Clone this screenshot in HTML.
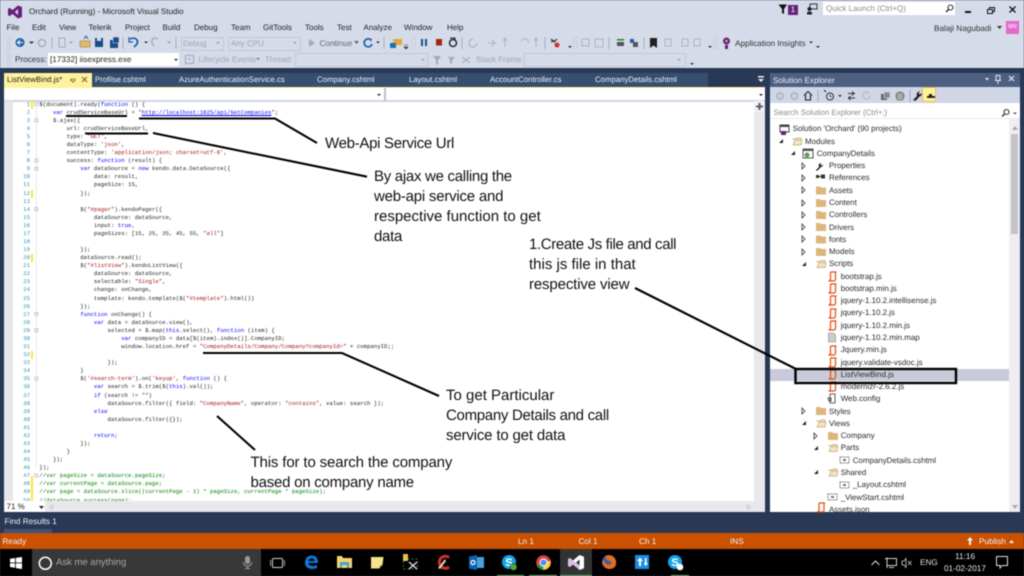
<!DOCTYPE html>
<html><head><meta charset="utf-8"><title>Orchard</title>
<style>
html,body{margin:0;padding:0;background:#293955;}
#r{position:relative;width:1024px;height:576px;overflow:hidden;background:#293955;font-family:"Liberation Sans",sans-serif;font-size:8px;color:#222;text-rendering:geometricPrecision;filter:blur(.42px);}
.a{position:absolute;}
.t{position:absolute;white-space:nowrap;line-height:12px;height:12px;}
.g{color:#a2a4a5;}
.w{color:#f0f2f6;}
pre{position:absolute;margin:0;font-family:"Liberation Mono",monospace;font-size:5.7px;line-height:8.08px;white-space:pre;}
.k{color:#0000ff}.s{color:#a31515}.c{color:#008000}.u{color:#0000ff;text-decoration:underline}
.tree .t{color:#2a2a2a;font-size:7.95px}
.n{position:absolute;font-size:15px;line-height:20px;color:#111;white-space:nowrap}
.y{position:absolute;left:31px;width:2px;background:#fee62e}
svg{position:absolute;overflow:visible}
</style></head><body><div id="r">

<!-- chrome background -->
<div class="a" style="left:0;top:0;width:1024px;height:68px;background:#d6dbe9"></div>

<!-- title -->
<svg style="left:7px;top:5px" width="16" height="14" viewBox="0 0 16 14"><path d="M11 0.5 15 2v10l-4 1.5L5.5 9 2.6 11 1 10.2V3.8L2.6 3l2.9 2zM11 4 7.8 7 11 10z" fill="#68217a" fill-rule="evenodd"/></svg>
<div class="t" style="left:29px;top:5.5px;font-size:8px">Orchard (Running) - Microsoft Visual Studio</div>

<!-- right caption -->
<svg style="left:778px;top:3px" width="20" height="12"><path d="M0.5 1.5H9L6 6v5L4 10V6z" fill="#111"/></svg>
<div class="a" style="left:788px;top:5px;width:10px;height:10px;background:#68217a;color:#fff;font-size:8px;line-height:10px;text-align:center">1</div>
<svg style="left:806px;top:3px" width="12" height="12"><rect x="4" y="1" width="7" height="5" fill="none" stroke="#333"/><circle cx="3.5" cy="6" r="2" fill="#222"/><path d="M1 11.5V10q0-1.500 2.500-1.500T6 10v1.500z" fill="#222"/></svg>
<div class="a" style="left:823px;top:2px;width:132px;height:13px;background:#fff"></div>
<div class="t g" style="left:826px;top:3px;color:#8a8a8a">Quick Launch (Ctrl+Q)</div>
<svg style="left:945px;top:4px" width="9" height="9"><circle cx="5.500" cy="3.500" r="2.500" fill="none" stroke="#333" stroke-width="1.100"/><path d="M3.800 5.200 1 8" stroke="#333" stroke-width="1.500"/></svg>
<div class="a" style="left:965px;top:11px;width:6px;height:2px;background:#111"></div>
<svg style="left:987px;top:7px" width="8" height="7"><rect x="2.500" y=".5" width="5" height="4" fill="none" stroke="#111"/><rect x=".5" y="2.500" width="5" height="4" fill="#d6dbe9" stroke="#111"/></svg>
<svg style="left:1009px;top:6px" width="7" height="7"><path d="M.5.500l6 6M6.500.500l-6 6" stroke="#111" stroke-width="1.300"/></svg>
<div class="t" style="left:934px;top:22.500px;font-size:8.200px;color:#333">Balaji Nagubadi</div>
<svg style="left:997px;top:26px" width="5" height="3"><path d="M0 0h5L2.500 3z" fill="#333"/></svg>
<div class="a" style="left:1006px;top:21px;width:13px;height:13px;background:#e369cb;color:#fff;font-size:6px;line-height:13px;text-align:center">BN</div>

<!-- menu -->
<div class="t" style="left:6.500px;top:21.500px">File</div>
<div class="t" style="left:32px;top:21.500px">Edit</div>
<div class="t" style="left:59px;top:21.500px">View</div>
<div class="t" style="left:88.500px;top:21.500px">Telerik</div>
<div class="t" style="left:125px;top:21.500px">Project</div>
<div class="t" style="left:162.500px;top:21.500px">Build</div>
<div class="t" style="left:194px;top:21.500px">Debug</div>
<div class="t" style="left:231px;top:21.500px">Team</div>
<div class="t" style="left:263px;top:21.500px">GitTools</div>
<div class="t" style="left:305px;top:21.500px">Tools</div>
<div class="t" style="left:337px;top:21.500px">Test</div>
<div class="t" style="left:363.500px;top:21.500px">Analyze</div>
<div class="t" style="left:404px;top:21.500px">Window</div>
<div class="t" style="left:447px;top:21.500px">Help</div>

<!-- toolbar row 1 -->
<svg style="left:0;top:34px" width="1024" height="18">
<path d="M8 3v13M10 3v13" stroke="#bcc3d3" stroke-dasharray="1 1"/>
<circle cx="20" cy="8.500" r="4.500" fill="#1c5fa8"/><path d="M23 8.500h-5M20 6l-2.500 2.500L20 11" stroke="#fff" fill="none"/>
<path d="M29 7.500h5l-2.500 2.500z" fill="#333"/>
<circle cx="42" cy="9" r="3.500" fill="none" stroke="#a8adb8" stroke-width="1.500"/>
<path d="M52 3v12" stroke="#a5adbf"/>
<rect x="59" y="4" width="6" height="9" fill="none" stroke="#aab"/>
<path d="M69 7.500h4l-2 2z" fill="#999"/>
<path d="M80 7h10v6H80z" fill="#e5b96c" stroke="#8a6c30" stroke-width=".5"/><path d="M84 5l2-3 2 3" stroke="#1c5fa8" fill="none"/>
<rect x="95" y="4" width="8" height="9" fill="#1a4d86"/><rect x="97" y="4" width="4" height="3" fill="#d6dbe9"/>
<rect x="110" y="6" width="8" height="8" fill="#1a4d86"/><rect x="113" y="3" width="6" height="6" fill="#1a4d86" stroke="#d6dbe9" stroke-width=".5"/>
<path d="M123 3v12" stroke="#a5adbf"/>
<path d="M130 5q5-2 7 1t-3 7" fill="none" stroke="#1c5fa8" stroke-width="1.700"/><path d="M129 3v5h4" fill="none" stroke="#1c5fa8" stroke-width="1.300"/>
<path d="M144 7.500h4l-2 2z" fill="#333"/>
<path d="M158 5q-5-2-6 1t2 6" fill="none" stroke="#a9aeb9" stroke-width="1.500"/>
<path d="M167 7.500h4l-2 2z" fill="#999"/>
<path d="M176 3v12" stroke="#a5adbf"/>
<rect x="181.500" y="3.500" width="42" height="13" fill="none" stroke="#c2c8d8"/><path d="M216 8h4l-2 2z" fill="#a0a0a8"/>
<rect x="228.500" y="3.500" width="72" height="13" fill="none" stroke="#c2c8d8"/><path d="M293 8h4l-2 2z" fill="#a0a0a8"/>
<path d="M309 5v8l6-4z" fill="#a4a9b5"/>
<path d="M371 6a4 4 0 1 0 1 4" fill="none" stroke="#1c5fa8" stroke-width="1.700"/><path d="M369 4l3 1-1 3z" fill="#1c5fa8"/>
<path d="M376 7.500h4l-2 2z" fill="#333"/>
<path d="M384 3v12" stroke="#a5adbf"/>
<rect x="393" y="5" width="9" height="6" fill="#e0a93b"/><rect x="390" y="9" width="6" height="5" fill="#1c6fb8"/>
<path d="M404 11h4M404 13l2 2 2-2z" fill="#333" stroke="#333" stroke-width=".6"/>
<path d="M412 2v14M415 2v14" stroke="#b9c0d0" stroke-dasharray="1 1"/>
<rect x="421" y="5" width="2" height="7" fill="#1a4d86"/><rect x="425" y="5" width="2" height="7" fill="#1a4d86"/>
<rect x="436" y="5" width="6" height="6.500" fill="#a1260d"/>
<circle cx="453" cy="9" r="3.500" fill="none" stroke="#222" stroke-width="1.400"/><path d="M450 4h5v2" fill="none" stroke="#222"/>
<path d="M462 3v12" stroke="#a5adbf"/>
<path d="M473 5a4 4 0 1 0 4 4" fill="none" stroke="#aeb3be" stroke-width="1.200"/>
<path d="M488 9h7M492 6l3 3-3 3" fill="none" stroke="#aeb3be"/>
<path d="M505 4v9M503 7l2-3 2 3" fill="none" stroke="#aeb3be"/>
<path d="M521 7q3-4 7-1l1 3" fill="none" stroke="#aeb3be"/>
<path d="M536 4v9M534 7l2-3 2 3" fill="none" stroke="#aeb3be"/>
<path d="M545 3v12" stroke="#a5adbf"/>
<path d="M551 5l3 3 3-3M551 8l3-2" fill="none" stroke="#222"/><circle cx="557" cy="11" r="2.500" fill="#d0312d"/>
<path d="M567 10h4M568 12l2 2 2-2z" fill="#333"/>
<path d="M574 2v14M577 2v14" stroke="#b9c0d0" stroke-dasharray="1 1"/>
<rect x="582" y="5" width="7" height="7" fill="none" stroke="#aeb3be"/><rect x="595" y="5" width="8" height="8" fill="none" stroke="#aeb3be"/>
<path d="M609 3v12" stroke="#a5adbf"/>
<rect x="617" y="5" width="7" height="1.500" fill="#2e7d32"/><rect x="617" y="8" width="7" height="4" fill="#555"/>
<rect x="630" y="5" width="4" height="4" fill="#1c5fa8"/><rect x="633" y="8" width="5" height="5" fill="#555"/>
<path d="M644 3v12" stroke="#a5adbf"/>
<path d="M650 4h7v10l-3.500-2.500L650 14z" fill="#222"/>
<rect x="665" y="5" width="6" height="7" fill="none" stroke="#aeb3be"/><rect x="682" y="5" width="6" height="7" fill="none" stroke="#aeb3be"/><rect x="694" y="5" width="6" height="7" fill="none" stroke="#aeb3be"/>
<path d="M707 10h4M708 12l2 2 2-2z" fill="#333"/>
<path d="M714 2v14M717 2v14" stroke="#b9c0d0" stroke-dasharray="1 1"/>
<circle cx="726.500" cy="7" r="3.500" fill="#68217a"/><circle cx="726.500" cy="7" r="1.200" fill="#e5c36b"/><path d="M725 11h3v4h-3z" fill="#68217a"/>
<path d="M809 7.500h4l-2 2z" fill="#333"/>
<path d="M815 10h4M816 12l2 2 2-2z" fill="#333"/>
</svg>
<div class="t g" style="left:183px;top:37.500px">Debug</div>
<div class="t g" style="left:231px;top:37.500px">Any CPU</div>
<div class="t" style="left:319.500px;top:37.500px;color:#666;font-size:8.200px">Continue</div>
<svg style="left:354px;top:41px" width="5" height="3"><path d="M0 0h5L2.500 3z" fill="#666"/></svg>
<div class="t" style="left:735px;top:37.500px;color:#333;font-size:8.200px">Application Insights</div>

<!-- toolbar row 2 -->
<svg style="left:0;top:52px" width="1024" height="16">
<path d="M8 1v13M10 1v13" stroke="#bcc3d3" stroke-dasharray="1 1"/>
<rect x="185.500" y="3.500" width="8" height="8" fill="none" stroke="#a5a9b3"/><path d="M191 7h-3" stroke="#a5a9b3"/>
<path d="M256 6h4l-2 2z" fill="#777"/>
<rect x="295.500" y="1.500" width="132" height="13" fill="none" stroke="#c2c8d8"/><path d="M421 7h4l-2 2z" fill="#a0a0a8"/>
<path d="M433 4h8l-3 4v5l-2-1V8z" fill="#a5a9b3"/><path d="M448 5h7l-3 3v4l-2-1V8z" fill="#a5a9b3"/>
<path d="M462 5l8 6M470 5l-8 6" stroke="#a5a9b3"/>
<rect x="524.500" y="1.500" width="161" height="13" fill="none" stroke="#c2c8d8"/><path d="M677 7h4l-2 2z" fill="#a0a0a8"/>
<path d="M689 9h4M690 11l2 2 2-2z" fill="#333"/>
</svg>
<div class="t" style="left:15px;top:53.500px;color:#333;font-size:8.200px">Process:</div>
<div class="a" style="left:48px;top:53px;width:131px;height:13px;background:#fff"></div>
<div class="t" style="left:50px;top:53.500px;color:#222;font-size:8.200px">[17332] iisexpress.exe</div>
<svg style="left:174px;top:59px" width="4" height="2"><path d="M0 0h4L2 2z" fill="#222"/></svg>
<div class="t g" style="left:198.500px;top:53.500px">Lifecycle Events</div>
<div class="t g" style="left:265px;top:53.500px">Thread:</div>
<div class="t g" style="left:476px;top:53.500px">Stack Frame:</div>

<!-- tabs -->
<div class="a" style="left:92px;top:73px;width:616px;height:14px;background:#364e6f"></div>
<div class="a" style="left:4px;top:73px;width:88px;height:14px;background:#fff29d"></div>
<div class="a" style="left:4px;top:87px;width:761px;height:1px;background:#fff29d"></div>
<div class="t" style="left:7px;top:74px;color:#222;font-size:7.800px">ListViewBind.js*</div>
<svg style="left:70px;top:76px" width="20" height="8"><path d="M1 3h4v2H1zM0 4H1M3 5v2" fill="none" stroke="#75633d" stroke-width=".8"/><path d="M12 1l5 5M17 1l-5 5" stroke="#75633d" stroke-width="1"/></svg>
<div class="t w" style="left:95px;top:74px;font-size:7.800px">Profilse.cshtml</div>
<div class="t w" style="left:179px;top:74px;font-size:7.800px">AzureAuthenticationService.cs</div>
<div class="t w" style="left:317px;top:74px;font-size:7.800px">Company.cshtml</div>
<div class="t w" style="left:409px;top:74px;font-size:7.800px">Layout.cshtml</div>
<div class="t w" style="left:490px;top:74px;font-size:7.800px">AccountController.cs</div>
<div class="t w" style="left:595px;top:74px;font-size:7.800px">CompanyDetails.cshtml</div>
<svg style="left:758px;top:76px" width="7" height="6"><path d="M0 0h6v1.500H0zM0 3h6L3 6z" fill="#f0f2f6"/></svg>

<!-- editor -->
<div class="a" style="left:4px;top:88px;width:761px;height:424px;background:#fff"></div>
<div class="a" style="left:4px;top:100px;width:761px;height:1.500px;background:#cfd6e5"></div>
<div class="a" style="left:384px;top:88px;width:2px;height:13px;background:#b9c0d3"></div>
<svg style="left:377px;top:94px" width="4" height="2"><path d="M0 0h4L2 2z" fill="#222"/></svg>
<svg style="left:759px;top:94px" width="4" height="2"><path d="M0 0h4L2 2z" fill="#222"/></svg>
<div class="a" style="left:4px;top:101px;width:9px;height:400px;background:#e6e7e8"></div>
<div class="a" style="left:754px;top:101px;width:11px;height:400px;background:#e8e8ec"></div>
<div class="a" style="left:754px;top:101px;width:11px;height:11px;background:#eef0f5"></div>
<svg style="left:756px;top:103px" width="7" height="7"><path d="M3.500 0v7M0 3.500h7" stroke="#555" stroke-width="1.800"/></svg>
<div class="a" style="left:4px;top:501px;width:761px;height:11px;background:#e8e8ec"></div>
<div class="a" style="left:5px;top:501px;width:40px;height:11px;background:#fff;border:0"></div>
<div class="t" style="left:6.500px;top:500.500px;font-size:8px">71 %</div>
<svg style="left:39px;top:505.500px" width="5" height="3"><path d="M0 0h5L2.500 3z" fill="#222"/></svg>
<svg style="left:49px;top:504px" width="4" height="6"><path d="M4 0v6L0 3z" fill="#cfd0d4"/></svg>
<svg style="left:747px;top:504px" width="4" height="6"><path d="M0 0v6l4-3z" fill="#cfd0d4"/></svg>

<div class="y" style="top:101px;height:8px"></div>
<div class="y" style="top:189.500px;height:8px"></div>
<div class="y" style="top:254px;height:8px"></div>
<div class="y" style="top:351px;height:8px"></div>
<div class="y" style="top:476px;height:25px"></div>

<!-- line numbers -->
<pre style="left:10px;top:100.700px;width:20px;text-align:right;color:#2b91af;height:400px;overflow:hidden">1
2
3
4
5
6
7
8
9
10
11
12
13
14
15
16
17
18
19
20
21
22
23
24
25
26
27
28
29
30
31
32
33
34
35
36
37
38
39
40
41
42
43
44
45
46
47
48
49
50</pre>

<!-- outlining -->
<svg style="left:34px;top:100px" width="6" height="402">
<g fill="#fff" stroke="#a5a5a5" stroke-width=".6">
<rect x=".8" y="2.500" width="3" height="3"/><rect x=".8" y="18.700" width="3" height="3"/><rect x=".8" y="59" width="3" height="3"/><rect x=".8" y="67.200" width="3" height="3"/><rect x=".8" y="107.500" width="3" height="3"/><rect x=".8" y="212.500" width="3" height="3"/><rect x=".8" y="228.700" width="3" height="3"/><rect x=".8" y="277.200" width="3" height="3"/><rect x=".8" y="374" width="3" height="3"/>
</g>
<path d="M2.300 6V367" stroke="#d4d4d4" stroke-width=".5"/>
</svg>

<!-- code -->
<pre style="left:39.300px;top:100.700px;height:400px;overflow:hidden;color:#222">$(document).ready(<span class="k">function</span> () {
    <span class="k">var</span> crudServiceBaseUrl = <span class="s">"</span><span class="u">http://localhost:1025/api/GetCompanies</span><span class="s">"</span>;
    $.ajax({
        url: crudServiceBaseUrl,
        type: <span class="s">"GET"</span>,
        dataType: <span class="s">'json'</span>,
        contentType: <span class="s">'application/json; charset=utf-8'</span>,
        success: <span class="k">function</span> (result) {
            <span class="k">var</span> dataSource = <span class="k">new</span> kendo.data.DataSource({
                data: result,
                pageSize: 15,
            });

            $(<span class="s">"#pager"</span>).kendoPager({
                dataSource: dataSource,
                input: <span class="k">true</span>,
                pageSizes: [15, 25, 35, 45, 55, <span class="s">"all"</span>]

            });
            dataSource.read();
            $(<span class="s">"#listView"</span>).kendoListView({
                dataSource: dataSource,
                selectable: <span class="s">"Single"</span>,
                change: onChange,
                template: kendo.template($(<span class="s">"#template"</span>).html())
            });
            <span class="k">function</span> onChange() {
                <span class="k">var</span> data = dataSource.view(),
                    selected = $.map(<span class="k">this</span>.select(), <span class="k">function</span> (item) {
                        <span class="k">var</span> companyID = data[$(item).index()].CompanyID;
                        window.location.href = <span class="s">"CompanyDetails/Company/Company?companyId="</span> + companyID;;

                    });
            }
            $(<span class="s">'#search-term'</span>).on(<span class="s">'keyup'</span>, <span class="k">function</span> () {
                <span class="k">var</span> search = $.trim($(<span class="k">this</span>).val());
                <span class="k">if</span> (search != <span class="s">""</span>)
                    dataSource.filter({ field: <span class="s">"CompanyName"</span>, operator: <span class="s">"contains"</span>, value: search });
                <span class="k">else</span>
                    dataSource.filter({});

                <span class="k">return</span>;
            });
        }
    });
});
<span class="c">//var pageSize = dataSource.pageSize;</span>
<span class="c">//var currentPage = dataSource.page;</span>
<span class="c">//var page = dataSource.slice((currentPage - 1) * pageSize, currentPage * pageSize);</span>
<span class="c">//dataSource.success(page);</span></pre>

<!-- solution explorer -->
<div class="a" style="left:770px;top:73px;width:250px;height:14px;background:#4d6082"></div>
<div class="t w" style="left:773px;top:74.500px;font-size:8.100px">Solution Explorer</div>
<svg style="left:985px;top:75px" width="34" height="10"><path d="M0 3h4L2 5.500z" fill="#e8ebf2"/><path d="M11 .5h4v5h-4zM10 5.500h6M13 6v3" fill="none" stroke="#e8ebf2"/><path d="M24 1l5 5M29 1l-5 5" stroke="#e8ebf2" stroke-width="1.100"/></svg>
<div class="a" style="left:770px;top:87px;width:250px;height:16px;background:#cfd6e5"></div>
<div class="a" style="left:922px;top:87px;width:14px;height:15px;background:#fff29d;border:.5px solid #e5c365;box-sizing:border-box"></div>
<svg style="left:770px;top:87px" width="250" height="16">
<circle cx="10" cy="9" r="3.500" fill="#bfc3cc" stroke="#aeb2bc"/><path d="M12 9H8" stroke="#e8e8ee"/>
<circle cx="24.500" cy="9" r="3.500" fill="#bfc3cc" stroke="#aeb2bc"/><path d="M22.500 9h4" stroke="#e8e8ee"/>
<path d="M34 8.500l4-4 4 4M35.500 8v5h5V8" fill="none" stroke="#222" stroke-width="1.100"/>
<path d="M48 3v12" stroke="#a5adbf"/>
<path d="M54 3l2 2" stroke="#222"/><circle cx="60" cy="9.500" r="3.500" fill="none" stroke="#333"/><path d="M60 7.500v2h2" fill="none" stroke="#333" stroke-width=".7"/>
<path d="M68 8h4l-2 2z" fill="#333"/>
<path d="M78 6.500h7M82 4.500l2 2-2 2M85 11h-7M80.500 9l-2 2 2 2" fill="none" stroke="#333"/>
<path d="M99 6a3.500 3.500 0 1 0 1 3" fill="none" stroke="#aeb3be"/>
<rect x="111" y="7" width="6" height="6" fill="#666"/><rect x="114" y="5" width="6" height="6" fill="#888" stroke="#cfd6e5" stroke-width=".6"/>
<circle cx="130" cy="9" r="4" fill="none" stroke="#777"/><rect x="127" y="6" width="6" height="7" fill="#aaa" stroke="#666" stroke-width=".5"/>
<path d="M140 3v12" stroke="#a5adbf"/>
<path d="M143 13l4-4q-1-3 1.500-4.500L150 4l-1.500 2 1.500 1.500 2-1.500q0 3-2.500 3.500L145.500 14z" fill="#222"/>
<rect x="157" y="9" width="8" height="2" fill="#222"/><rect x="159" y="7" width="3" height="2" fill="#222"/>
</svg>
<div class="a" style="left:770px;top:103px;width:250px;height:409px;background:#fff"></div>
<div class="t" style="left:773.500px;top:107px;font-size:7.900px;color:#8a8a8a">Search Solution Explorer (Ctrl+;)</div>
<div class="a" style="left:770px;top:118px;width:250px;height:1px;background:#e8ecf3"></div>
<svg style="left:1001px;top:109px" width="18" height="8"><circle cx="5.500" cy="3" r="2.500" fill="none" stroke="#333" stroke-width="1.100"/><path d="M3.800 4.800 1 7.500" stroke="#333" stroke-width="1.400"/><path d="M12 3.500h4L14 5.500z" fill="#555"/></svg>
<!-- scrollbar -->
<div class="a" style="left:1009px;top:119px;width:11px;height:393px;background:#eeeef2"></div>
<div class="a" style="left:1011px;top:134px;width:7px;height:100px;background:#c2c3c9"></div>
<svg style="left:1012px;top:126px" width="6" height="4"><path d="M0 4h6L3 0z" fill="#a8a9ae"/></svg>
<svg style="left:1012px;top:505px" width="6" height="4"><path d="M0 0h6L3 4z" fill="#a8a9ae"/></svg>
<!-- selected row -->
<div class="a" style="left:770px;top:368.500px;width:239px;height:12.500px;background:#c9cbda"></div>

<div class="tree">
<div class="t" style="left:792.700px;top:123.300px">Solution 'Orchard' (90 projects)</div>
<div class="t" style="left:805px;top:135.600px">Modules</div>
<div class="t" style="left:816.700px;top:147.900px">CompanyDetails</div>
<div class="t" style="left:829px;top:160.100px">Properties</div>
<div class="t" style="left:829px;top:172.400px">References</div>
<div class="t" style="left:829px;top:184.700px">Assets</div>
<div class="t" style="left:829px;top:197px">Content</div>
<div class="t" style="left:829px;top:209.200px">Controllers</div>
<div class="t" style="left:829px;top:221.500px">Drivers</div>
<div class="t" style="left:829px;top:233.800px">fonts</div>
<div class="t" style="left:829px;top:246px">Models</div>
<div class="t" style="left:829px;top:258.300px">Scripts</div>
<div class="t" style="left:840.700px;top:270.600px">bootstrap.js</div>
<div class="t" style="left:840.700px;top:282.900px">bootstrap.min.js</div>
<div class="t" style="left:840.700px;top:295.100px">jquery-1.10.2.intellisense.js</div>
<div class="t" style="left:840.700px;top:307.400px">jquery-1.10.2.js</div>
<div class="t" style="left:840.700px;top:319.700px">jquery-1.10.2.min.js</div>
<div class="t" style="left:840.700px;top:332px">jquery-1.10.2.min.map</div>
<div class="t" style="left:840.700px;top:344.200px">Jquery.min.js</div>
<div class="t" style="left:840.700px;top:356.500px">jquery.validate-vsdoc.js</div>
<div class="t" style="left:840.700px;top:368.800px">ListViewBind.js</div>
<div class="t" style="left:840.700px;top:381px">modernizr-2.6.2.js</div>
<div class="t" style="left:840.700px;top:393.300px">Web.config</div>
<div class="t" style="left:829px;top:405.600px">Styles</div>
<div class="t" style="left:829px;top:417.900px">Views</div>
<div class="t" style="left:840.700px;top:430.100px">Company</div>
<div class="t" style="left:840.700px;top:442.400px">Parts</div>
<div class="t" style="left:852.700px;top:454.700px">CompanyDetails.cshtml</div>
<div class="t" style="left:840.700px;top:467px">Shared</div>
<div class="t" style="left:852.700px;top:479.200px">_Layout.cshtml</div>
<div class="t" style="left:840.700px;top:491.500px">_ViewStart.cshtml</div>
<div class="t" style="left:829px;top:503.800px;height:8px;overflow:hidden">Assets.json</div>
</div>

<svg style="left:770px;top:119px;width:250px;height:393px" width="250" height="393" viewBox="0 119 250 393">
<defs>
<path id="fo" d="M0 2h4l1 1h5v7H0z" fill="#dcb67a"/>
<path id="fp" d="M0 3h4l1-1h4v2H3L1 9h8l1-5H3" fill="#efe3cd" stroke="#c9a86a" stroke-width=".7"/>
<path id="tr" d="M0 0l3 3-3 3z" fill="#fff" stroke="#333" stroke-width=".8"/>
<path id="ex" d="M4 0v4H0z" fill="#222"/>
<g id="js"><path d="M3 1h6M3 1v7q0 2-2 2h5q2 0 2-2V1" fill="none" stroke="#e44d10" stroke-width="1.200"/></g>
<g id="cs"><rect x="0" y="2" width="9" height="6" fill="none" stroke="#777" stroke-dasharray="1.500 .7"/><path d="M3 4h3v2H3z" fill="#777"/></g>
</defs>
<g transform="translate(10 125)"><rect width="9" height="7" fill="none" stroke="#444"/><rect width="9" height="2" fill="#444"/><path d="M1 6h5v4H1z" fill="#68217a"/></g>
<use href="#ex" x="9" y="139"/><use href="#fp" x="22" y="136"/>
<use href="#ex" x="21" y="151"/><g transform="translate(33 149)"><rect width="10" height="9" fill="none" stroke="#555"/><rect width="10" height="2" fill="#555"/><circle cx="4" cy="6" r="2.500" fill="#5a9e5a"/></g>
<use href="#tr" x="32" y="163"/><path d="M46 170l3-3q-1-3 1-3.500l1.500-.500-1 1.500 1 1 1.500-1q0 2-2 2.500L47 171z" fill="#222"/>
<use href="#tr" x="32" y="175"/><rect x="46" y="175" width="3" height="3" fill="#333"/><rect x="51" y="174.500" width="4" height="4" fill="#333"/><path d="M49 176.500h2" stroke="#333"/>
<use href="#tr" x="32" y="187"/><use href="#fo" x="46" y="184.500"/>
<use href="#tr" x="32" y="200"/><use href="#fo" x="46" y="197"/>
<use href="#tr" x="32" y="212"/><use href="#fo" x="46" y="209"/>
<use href="#tr" x="32" y="224"/><use href="#fo" x="46" y="221"/>
<use href="#tr" x="32" y="236"/><use href="#fo" x="46" y="233.500"/>
<use href="#tr" x="32" y="249"/><use href="#fo" x="46" y="246"/>
<use href="#ex" x="32" y="262"/><use href="#fp" x="46" y="258.500"/>
<use href="#js" x="57.500" y="271"/><use href="#js" x="57.500" y="283"/><use href="#js" x="57.500" y="295"/>
<use href="#js" x="57.500" y="308"/><use href="#js" x="57.500" y="320"/>
<path d="M58.500 333h5l2 2v7h-7z" fill="#ccc" stroke="#888" stroke-width=".6"/>
<use href="#js" x="57.500" y="345"/><use href="#js" x="57.500" y="357"/><use href="#js" x="57.500" y="369"/><use href="#js" x="57.500" y="381"/>
<path d="M60 394h5v9h-5zM58 398h3v3h-2z" fill="#fff" stroke="#333" stroke-width=".8"/>
<use href="#tr" x="32" y="408"/><use href="#fo" x="46" y="405"/>
<use href="#ex" x="32" y="421"/><use href="#fp" x="46" y="418"/>
<use href="#tr" x="44" y="433"/><use href="#fo" x="58" y="430"/>
<use href="#ex" x="44" y="446"/><use href="#fp" x="58" y="442.500"/>
<use href="#cs" x="70" y="455"/>
<use href="#ex" x="44" y="470"/><use href="#fp" x="58" y="467"/>
<use href="#cs" x="70" y="480"/>
<use href="#cs" x="58" y="492"/>
<use href="#js" x="46" y="502"/>
</svg>

<!-- annotations -->
<svg style="left:0;top:0" width="1024" height="576">
<g fill="none" stroke="#000" stroke-width="2.100">
<path d="M66 116H127"/>
<path d="M139 118.500H275L317 143"/>
<path d="M85 133.500H148"/>
<path d="M153 133 367 176.700"/>
<path d="M203 353H342L439 396"/>
<path d="M217 416 255 450"/>
<path d="M635 288 796 369"/>
<rect x="795.500" y="369" width="160.500" height="14" stroke-width="2.400"/>
</g>
</svg>
<div class="n" style="left:325px;top:134px;letter-spacing:-.3px">Web-Api Service Url</div>
<div class="n" style="left:374px;top:167px;letter-spacing:-.29px">By ajax we calling the</div>
<div class="n" style="left:374px;top:187px;letter-spacing:-.22px">web-api service and</div>
<div class="n" style="left:374px;top:206.500px">respective function to get</div>
<div class="n" style="left:374px;top:226.500px;letter-spacing:-.3px">data</div>
<div class="n" style="left:529px;top:234.500px;letter-spacing:-.35px">1.Create Js file and call</div>
<div class="n" style="left:529px;top:254.500px">this js file in that</div>
<div class="n" style="left:529px;top:274.500px;letter-spacing:-.14px">respective view</div>
<div class="n" style="left:446px;top:386px">To get Particular</div>
<div class="n" style="left:446px;top:406px;letter-spacing:-.3px">Company Details and call</div>
<div class="n" style="left:446px;top:426px;letter-spacing:-.17px">service to get data</div>
<div class="n" style="left:250.500px;top:453px;letter-spacing:-.14px">This for to search the company</div>
<div class="n" style="left:250.500px;top:473px;letter-spacing:-.24px">based on company name</div>

<!-- find results -->
<div class="t w" style="left:4.500px;top:516px;font-size:8.200px">Find Results 1</div>
<div class="a" style="left:4px;top:529px;width:48px;height:4px;background:#3e5377"></div>

<!-- status bar -->
<div class="a" style="left:0;top:533px;width:1024px;height:16px;background:#ca5100"></div>
<div class="t w" style="left:2.500px;top:535.500px;font-size:8.200px">Ready</div>
<div class="t w" style="left:518px;top:535.500px;font-size:8.200px">Ln 1</div>
<div class="t w" style="left:578.500px;top:535.500px;font-size:8.200px">Col 1</div>
<div class="t w" style="left:639px;top:535.500px;font-size:8.200px">Ch 1</div>
<div class="t w" style="left:730px;top:535.500px;font-size:8.200px">INS</div>
<svg style="left:967px;top:537px" width="6" height="8"><path d="M3 0l3 3.500H4V8H2V3.500H0z" fill="#f0f2f6"/></svg>
<div class="t w" style="left:979px;top:535.500px;font-size:8.200px">Publish</div>
<svg style="left:1009px;top:540px" width="5" height="3"><path d="M0 3h5L2.500 0z" fill="#f0f2f6"/></svg>

<!-- taskbar -->
<div class="a" style="left:0;top:549px;width:1024px;height:27px;background:#000"></div>
<div class="a" style="left:32px;top:549px;width:229px;height:27px;background:#383838"></div>
<svg style="left:10px;top:557px" width="12" height="12"><path d="M0 1.800 5 1v4.500H0zM5.800.9 12 0v5.500H5.800zM0 6.300h5v4.500l-5-.8zM5.800 6.300H12V12l-6.200-.9z" fill="#fff"/></svg>
<svg style="left:38px;top:556px" width="15" height="15"><circle cx="7.300" cy="7.300" r="6" fill="none" stroke="#fff" stroke-width="1.500"/></svg>
<div class="t" style="left:56px;top:556.500px;font-size:9.500px;color:#a8a8a8">Ask me anything</div>
<svg style="left:243px;top:556px" width="9" height="13"><rect x="2" y="0" width="5" height="8" rx="2.500" fill="#9a9a9a"/><path d="M.5 6q0 4 4 4t4-4M4.500 10v3M2 12.500h5" fill="none" stroke="#9a9a9a"/></svg>
<svg style="left:270px;top:557px" width="15" height="13"><rect x="2.500" y="1.500" width="10" height="9" rx="1" fill="none" stroke="#d0d0d0"/><path d="M.5 3v6M14.500 3v6" stroke="#a0a0a0"/></svg>
<svg style="left:304px;top:555px" width="15" height="15"><path d="M1 8C1 3 4 .5 8 .5s6 3 6 7.500H4.500c0 3 4.500 4 8.500 1.700v3.300C8 15 1 14 1 8zM4.500 6h6c0-3.500-5.500-3.500-6 0z" fill="#0e78d7"/></svg>
<svg style="left:337px;top:555px" width="15" height="14"><path d="M0 1h5l1 2h9v10H0z" fill="#f6d36a"/><rect x="3" y="7" width="9" height="6" fill="#3aa3dd"/><rect x="5" y="10" width="5" height="3" fill="#f6d36a"/></svg>
<svg style="left:371px;top:557px" width="13" height="12"><path d="M0 0h12.500l-1 8L8 11.500H0z" fill="#f3e48e"/><path d="M8 11.500 9 8h2.500z" fill="#b3a654"/></svg>
<svg style="left:403px;top:554px" width="16" height="16"><rect x=".5" y="5" width="14" height="10" fill="none" stroke="#2e7d32" stroke-dasharray="2 2"/><rect x="0" y="0" width="5" height="7" fill="#e8c24a"/><path d="M6 8l8 7M14 8l-8 7" stroke="#ddd" stroke-width="1.400"/></svg>
<svg style="left:436px;top:555px" width="16" height="15"><path d="M13 2.500A6 6 0 1 0 13 12" fill="none" stroke="#c9302c" stroke-width="3"/><path d="M2 13 9 4l1 2-6 8z" fill="#e8d5b5"/></svg>
<svg style="left:469px;top:555px" width="15" height="15"><rect x="5" y="2" width="10" height="11" fill="#4a9fdc"/><path d="M0 1.500 8 0v15L0 13.500z" fill="#0a64ad"/><circle cx="4" cy="7.500" r="2" fill="none" stroke="#fff" stroke-width="1.200"/></svg>
<svg style="left:501px;top:554px" width="17" height="17"><circle cx="8" cy="8" r="7" fill="#13a7e6"/><text x="8" y="12" font-size="11" font-weight="bold" text-anchor="middle" fill="#fff" font-family="Liberation Sans">S</text><circle cx="12.500" cy="13" r="3.500" fill="#4fa843" stroke="#000" stroke-width=".5"/></svg>
<svg style="left:536px;top:555px" width="15" height="15"><circle cx="7.500" cy="7.500" r="7.300" fill="#db4437"/><path d="M7.500 7.500 1.300 11.300A7.300 7.300 0 0 0 7.500 14.800L11 9z" fill="#0f9d58"/><path d="M7.500 7.500 14.500 5.500A7.300 7.300 0 0 1 7 14.800z" fill="#ffcd40"/><circle cx="7.500" cy="7.500" r="3.500" fill="#4a8af4" stroke="#fff"/></svg>
<div class="a" style="left:560px;top:549px;width:32px;height:27px;background:#333"></div>
<svg style="left:568px;top:555px" width="16" height="15"><path d="M11.500 0 16 1.800v11.400L11.500 15 5 9.500 2 12 0 11V4l2-1 3 2.500zM11.500 4.500 8 7.500l3.500 3z" fill="#fff" fill-rule="evenodd"/><path d="M0 4l2-1 9.500 8V15L5 9.500 2 12 0 11z" fill="#b180d7" opacity=".5"/></svg>
<svg style="left:601px;top:554px" width="16" height="16"><circle cx="8" cy="8" r="7" fill="#3a5fa8"/><path d="M4 2q8-3 11 5 1 8-7 8Q2 14 1 8l2-2 1 3q3 3 6 1 1-3-2-3L5 5z" fill="#e66b1e"/></svg>
<svg style="left:635px;top:555px" width="14" height="14"><rect width="14" height="14" fill="#1a8fe3"/><path d="M5 2.500 8 6H6v5H4V6H2zM10 3h1.500v5H13l-2.200 3L8.500 8H10z" fill="#fff"/></svg>
<svg style="left:667px;top:554px" width="17" height="17"><circle cx="8" cy="8" r="7" fill="#13a7e6"/><text x="8" y="12" font-size="11" font-weight="bold" text-anchor="middle" fill="#fff" font-family="Liberation Sans">S</text><circle cx="13" cy="13" r="3.300" fill="#fff"/></svg>
<div class="a" style="left:497px;top:574.500px;width:27px;height:1.500px;background:#76b96a"></div>
<div class="a" style="left:529px;top:574.500px;width:28px;height:1.500px;background:#76b96a"></div>
<div class="a" style="left:560px;top:574.500px;width:32px;height:1.500px;background:#76b96a"></div>
<div class="a" style="left:671px;top:574.500px;width:18px;height:1.500px;background:#76b96a"></div>
<svg style="left:871px;top:560px" width="9" height="6"><path d="M.5 5 4.500 1l4 4" fill="none" stroke="#ddd"/></svg>
<svg style="left:885px;top:557px" width="12" height="12"><rect x="2" y="1.500" width="9.500" height="7" fill="none" stroke="#ccc"/><path d="M0 2l2-1v10" stroke="#ccc" fill="none"/><path d="M4 10.500h5" stroke="#ccc"/></svg>
<svg style="left:902px;top:558px" width="11" height="10"><path d="M0 3h2l2-2.500v9L2 7H0z" fill="none" stroke="#ccc" stroke-width=".8"/><path d="M6 3l3.500 4M9.500 3 6 7" stroke="#ccc" stroke-width=".8"/></svg>
<div class="t" style="left:920px;top:557px;color:#ddd;font-size:8.200px">ENG</div>
<div class="t" style="left:955px;top:550px;color:#e8e8e8;font-size:8.300px">11:16</div>
<div class="t" style="left:944px;top:563px;color:#e8e8e8;font-size:8.200px">01-02-2017</div>
<svg style="left:996px;top:556px" width="13" height="13"><path d="M.5.500h11v9H6L4 12V9.500H.5z" fill="none" stroke="#ddd"/></svg>

</div></body></html>
